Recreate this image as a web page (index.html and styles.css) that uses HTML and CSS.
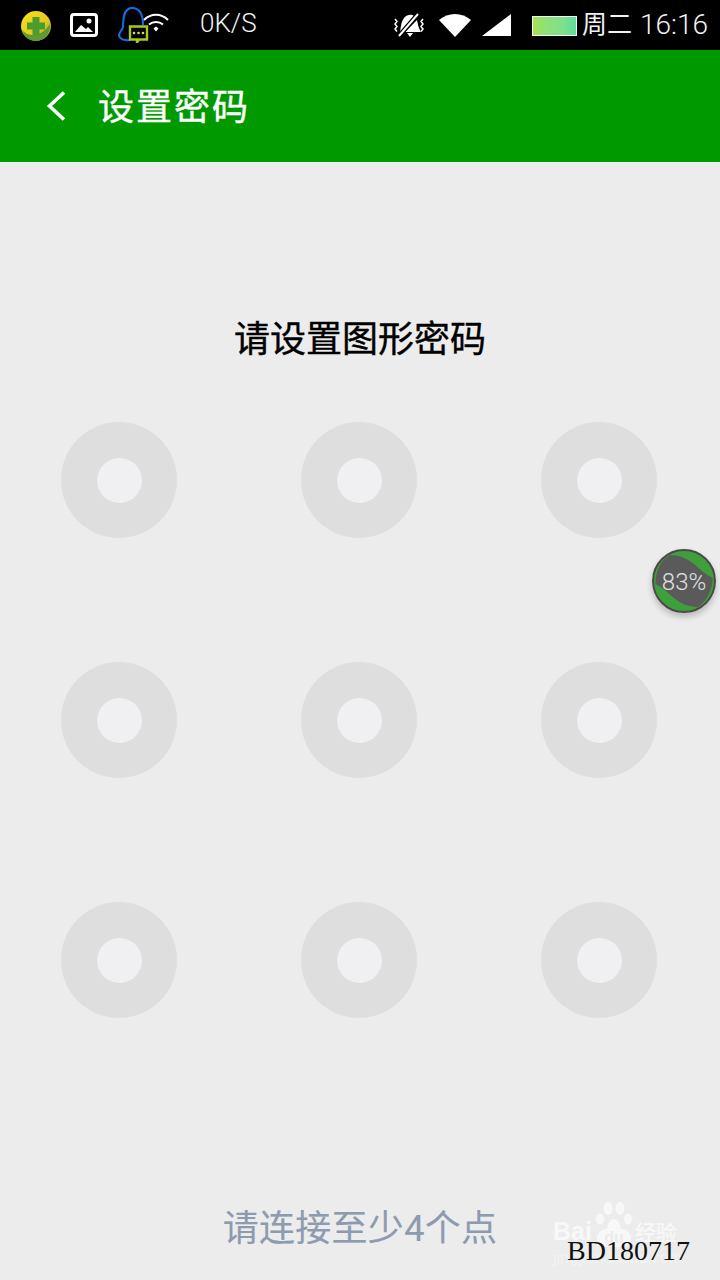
FILE: index.html
```html
<!DOCTYPE html>
<html lang="zh">
<head>
<meta charset="utf-8">
<title>设置密码</title>
<link rel="stylesheet" href="styles.css">
</head>
<body>
<div class="screen">
  <header class="status">
    <div class="status-left">
      <svg class="ic-360" viewBox="0 0 32 32"><defs><linearGradient id="g360" x1="0" y1="0" x2="1" y2="1"><stop offset="0" stop-color="#f7e11c"/><stop offset=".6" stop-color="#e6c81e"/><stop offset="1" stop-color="#6fa32c"/></linearGradient></defs><circle cx="16" cy="16" r="15" fill="url(#g360)"/><path d="M2 20c6 7 19 8 28-6 1 10-7 17-14 17S4 26 2 20z" fill="#5d9a34"/><path d="M12.500 7h7v5.500H25v7h-5.500V25h-7v-5.500H7v-7h5.500z" fill="#4a9c2e"/></svg>
      <svg class="ic-pic" viewBox="0 0 28 24"><rect x="1.500" y="1.500" width="25" height="21" rx="2.500" fill="#000" stroke="#fff" stroke-width="3"/><path d="M5 19l6-7c2 1 3 3 5 4l2-2 5 5z" fill="#fff"/><circle cx="19" cy="8" r="2.500" fill="#fff"/></svg>
      <svg class="ic-qq" viewBox="0 0 32 36"><path d="M13 33C8 34 2 32 2 28c0-3 3-4 4-8C6 8 8 1 15 1c7 0 11 6 11 17" fill="none" stroke="#0f6fe8" stroke-width="2"/><path d="M13 19.500h17v13H22l-2 3v-3h-7z" fill="#000" stroke="#a8c61e" stroke-width="2.400"/><circle cx="17" cy="26" r="1.300" fill="#d4e24a"/><circle cx="21.500" cy="26" r="1.300" fill="#d4e24a"/><circle cx="26" cy="26" r="1.300" fill="#d4e24a"/></svg>
      <svg class="ic-wifi1" viewBox="0 0 26 20"><path d="M1 7c7-7 17-7 24 0M6 11.500c4-3.500 10-3.500 14 0" fill="none" stroke="#fff" stroke-width="2"/><path d="M10.500 15.500l2.500-2 2.500 2-2.500 3z" fill="#fff"/></svg>
      <span class="speed">0K/S</span>
    </div>
    <div class="status-right">
      <svg class="ic-mute" viewBox="0 0 32 26"><path d="M11 6c3-4 8-4 10-2L7 20c1-5 1-10 4-14zM24 8c1 4 1 7 4 12H12z" fill="#fff"/><path d="M14 21h6l-3 4z" fill="#fff"/><path d="M6 24L25 2" stroke="#000" stroke-width="4.500"/><path d="M6 24L25 2" stroke="#fff" stroke-width="2"/><path d="M2 7l2 2.500-2 2.500 2 2.500-2 2.500 2 2.500M30 7l-2 2.500 2 2.500-2 2.500 2 2.500-2 2.500" fill="none" stroke="#fff" stroke-width="1.500"/></svg>
      <svg class="ic-wifi2" viewBox="0 0 32 24"><path d="M0 7C9-1 23-1 32 7L16 24z" fill="#fff"/></svg>
      <svg class="ic-signal" viewBox="0 0 29 22"><path d="M0 22L29 0v22z" fill="#fff"/></svg>
      <div class="battery"></div>
      <span class="clock-day">周二</span>
      <span class="clock-time">16:16</span>
    </div>
  </header>

  <div class="appbar">
    <svg class="back" viewBox="0 0 22 32"><path d="M19 2.500L4.500 16 19 29.500" fill="none" stroke="#fff" stroke-width="3.600"/></svg>
    <h1 class="appbar-title">设置密码</h1>
  </div>

  <main class="content">
    <h2 class="prompt">请设置图形密码</h2>
    <div class="pattern">
      <div class="node"></div><div class="node"></div><div class="node"></div>
      <div class="node"></div><div class="node"></div><div class="node"></div>
      <div class="node"></div><div class="node"></div><div class="node"></div>
    </div>
    <p class="hint">请连接至少4个点</p>
  </main>

  <div class="float-ball">
    <svg class="float-art" viewBox="0 0 64 64"><circle cx="32" cy="32" r="31" fill="#3f9f3a"/><path d="M18 6C28 6 36 10 42 15 48 20 54 26 60.500 29 61 40 55 52 46 58 36 58 28 54 22 49 16 44 10 38 3.500 35 3 22 9 11 18 6z" fill="#5a5a5a"/><circle cx="32" cy="32" r="31" fill="none" stroke="#4a4a4a" stroke-width="2"/></svg>
    <span class="float-text">83%</span>
  </div>

  <div class="watermark">
    <svg class="paw" viewBox="0 0 38 28"><ellipse cx="5" cy="17" rx="4" ry="5.500"/><ellipse cx="13" cy="6.500" rx="4.500" ry="6.500"/><ellipse cx="25" cy="6.500" rx="4.500" ry="6.500"/><ellipse cx="33" cy="17" rx="4" ry="5.500"/><path d="M12 28c1-8 4-11 7-11s6 3 7 11z"/></svg>
    <span class="wm-bai">Bai</span><span class="wm-du">du</span><span class="wm-cn">经验</span>
    <span class="wm-url">jingyan.baidu.com</span>
  </div>
  <span class="stamp">BD180717</span>
</div>
</body>
</html>
```

FILE: styles.css
```css
* { box-sizing: border-box; margin: 0; padding: 0; }
html, body { width: 720px; height: 1280px; overflow: hidden; }
body { font-family: "Roboto", "Noto Sans CJK SC", sans-serif; background: #ececec; }
.screen { position: relative; width: 720px; height: 1280px; display: flex; flex-direction: column; background: #ececec; }

.status { flex: none; height: 50px; background: #000; display: flex; justify-content: space-between; align-items: center; color: #f2f2f2; }
.status-left { display: flex; align-items: center; padding-left: 20px; }
.status-right { display: flex; align-items: center; padding-right: 12px; }
.ic-360 { width: 32px; height: 32px; margin-top: 1px; }
.ic-pic { width: 28px; height: 24px; margin-left: 18px; }
.ic-qq { width: 32px; height: 36px; margin-left: 19px; }
.ic-wifi1 { width: 26px; height: 20px; margin-left: -6px; margin-top: -5px; }
.speed { font-size: 26px; margin-left: 31px; margin-top: -5px; line-height: 28px; font-weight: 300; }
.ic-mute { width: 32px; height: 26px; }
.ic-wifi2 { width: 32px; height: 24px; margin-left: 14px; margin-top: -1px; }
.ic-signal { width: 29px; height: 22px; margin-left: 11px; }
.battery { width: 45px; height: 20px; margin-left: 21px; margin-top: 2px; border: 1px solid #f4f4f4; background: linear-gradient(90deg, #a6e24f 0%, #8fe078 30%, #7fe08c 70%, #5fdc98 100%); }
.clock-day { font-size: 25px; line-height: 32px; margin-left: 5px; white-space: nowrap; }
.clock-time { font-size: 28px; line-height: 32px; margin-left: 8px; font-weight: 300; white-space: nowrap; }

.appbar { flex: none; height: 112px; background: #009900; display: flex; align-items: center; padding-left: 45px; color: #fff; }
.back { width: 22px; height: 32px; margin-top: -1px; }
.appbar-title { font-size: 36px; font-weight: 400; -webkit-text-stroke: .4px #fff; line-height: 48px; margin-left: 31px; margin-top: 4px; letter-spacing: 2px; }

.content { flex: 1; display: flex; flex-direction: column; }
.prompt { margin-top: 154px; height: 48px; line-height: 48px; font-size: 36px; font-weight: 400; -webkit-text-stroke: .4px #000; text-align: center; color: #000; }
.pattern { margin-top: 58px; padding-left: 61px; display: grid; grid-template-columns: repeat(3, 116px); gap: 124px; }
.node { width: 116px; height: 116px; border-radius: 50%; background: #dedede; display: flex; align-items: center; justify-content: center; }
.node::after { content: ""; width: 45px; height: 45px; border-radius: 50%; background: #f0f0f2; }
.hint { margin-top: 187px; height: 48px; line-height: 48px; font-size: 36px; -webkit-text-stroke: .15px #8e9aae; text-align: center; color: #8e9aae; letter-spacing: .3px; }

.float-ball { position: absolute; left: 652px; top: 549px; width: 64px; height: 64px; border-radius: 50%; box-shadow: 0 4px 6px rgba(0,0,0,.22); display: flex; align-items: center; justify-content: center; }
.float-art { position: absolute; left: 0; top: 0; width: 64px; height: 64px; }
.float-text { position: relative; color: #e0e0e0; font-size: 24px; line-height: 28px; font-weight: 300; margin-top: 2px; }

.watermark { position: absolute; left: 552px; top: 1202px; width: 168px; height: 78px; color: #f8f8f8; }
.paw { position: absolute; left: 43px; top: 0; width: 38px; height: 28px; fill: #f8f8f8; }
.wm-bai { position: absolute; left: 1px; top: 15px; font: 700 25px/28px "Liberation Sans", sans-serif; }
.wm-du { position: absolute; left: 45px; top: 27px; width: 34px; height: 18px; border-radius: 9px; background: #f8f8f8; color: #ececec; text-align: center; font: 700 16px/18px "Liberation Sans", sans-serif; }
.wm-cn { position: absolute; left: 83px; top: 15px; font: 500 21px/28px "Noto Sans CJK SC", sans-serif; }
.wm-url { position: absolute; left: 1px; top: 46px; font: 400 16px/20px "Liberation Sans", sans-serif; color: #f3f3f3; }
.stamp { position: absolute; left: 567px; top: 1235px; font: 400 28px/32px "Liberation Serif", serif; color: #111; }
```
